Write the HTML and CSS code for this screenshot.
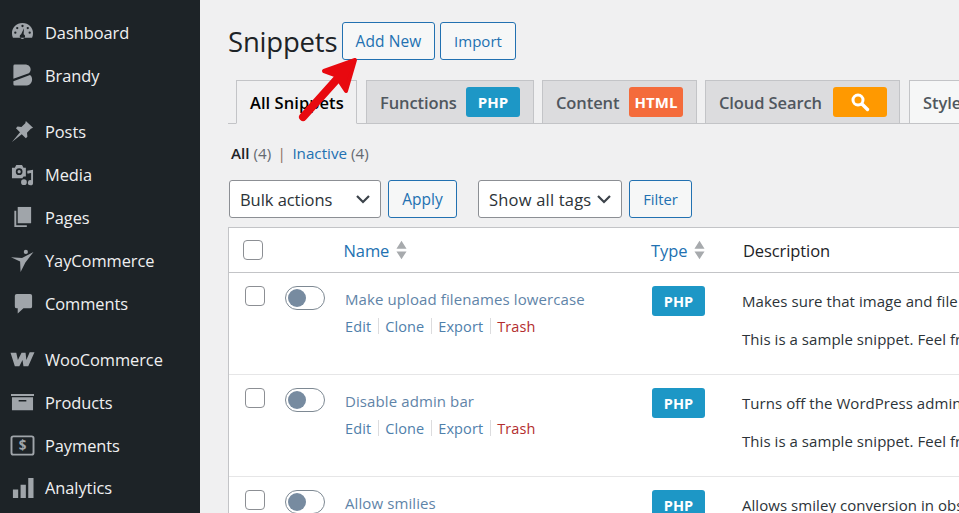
FILE: index.html
```html
<!DOCTYPE html>
<html lang="en">
<head>
<meta charset="utf-8">
<title>Snippets</title>
<link rel="stylesheet" href="styles.css">
</head>
<body>
<nav class="side">
  <a class="item"><svg class="ic" viewBox="0 0 24 24"><path fill-rule="evenodd" d="M12 2C5.600 2 1 7 1 12.500c0 1.900.3 3.500 1 5h20c.7-1.500 1-3.100 1-5C23 7 18.400 2 12 2zM12 4a1.200 1.200 0 1 1 0 2.400A1.200 1.200 0 0 1 12 4zM6.500 6.200a1.200 1.200 0 1 1 0 2.400 1.200 1.200 0 0 1 0-2.400zM17.500 6.200a1.200 1.200 0 1 1 0 2.400 1.200 1.200 0 0 1 0-2.400zM4.500 11a1.200 1.200 0 1 1 0 2.400 1.200 1.200 0 0 1 0-2.400zM19.500 11a1.200 1.200 0 1 1 0 2.400 1.200 1.200 0 0 1 0-2.400zM13.500 7.500l-.3 6.200a2.600 2.600 0 1 1-2.600 0z"/></svg>Dashboard</a>
  <a class="item"><svg class="ic" viewBox="0 0 24 24"><path d="M4 .5h10.500c3.800 0 6 2.300 6 5.300 0 1.600-.7 3-1.900 3.900L2.500 15.300V2A1.500 1.500 0 0 1 4 .5zM2.500 18l17.300-6.500c1.400 1 2.200 2.500 2.200 4.600 0 3.900-2.900 6.400-7 6.400H4a1.500 1.500 0 0 1-1.500-1.500z"/></svg>Brandy</a>
  <a class="item gap"><svg class="ic" viewBox="0 0 24 24"><path d="M15.500 1l7.500 7.200-2.300.8-4 4.400.4 4-1.600 1.700-4.300-4.300L1 23 9.400 12.700 5.200 8.500l1.600-1.600 4.100.4 4-4z"/></svg>Posts</a>
  <a class="item"><svg class="ic" viewBox="0 0 24 24"><path fill-rule="evenodd" d="M1 5h3l1.500-3h6L13 5h2.500v9H13.200a4 4 0 0 0-1.200 2H1zM8.500 5.500a3.500 3.500 0 1 0 0 7 3.500 3.500 0 0 0 0-7z"/><circle cx="8.500" cy="9" r="1.700"/><path d="M17 8l6-1v13.500a2.700 2.700 0 1 1-2-2.500v-7.500l-2 .3V11h-2zM13.500 17a3 3 0 1 1 0 6 3 3 0 0 1 0-6z"/></svg>Media</a>
  <a class="item"><svg class="ic" viewBox="0 0 24 24"><path d="M7 1h14v17H7z"/><path d="M3.500 5H5.500v15h11v2H3.500z"/></svg>Pages</a>
  <a class="item"><svg class="ic" viewBox="0 0 24 24"><circle cx="15.500" cy="3" r="2.200"/><path d="M0 8.500l11.500 1L23.500 3 17 11.500l-2 2.500-5 10-.5-11z"/></svg>YayCommerce</a>
  <a class="item"><svg class="ic" viewBox="0 0 24 24"><path d="M6 2h14a2 2 0 0 1 2 2v11a2 2 0 0 1-2 2h-7l-6 5.500V17H6a2 2 0 0 1-2-2V4a2 2 0 0 1 2-2z"/></svg>Comments</a>
  <a class="item gap"><svg class="ic wide" viewBox="0 0 25 24"><path d="M0 5h6l1.700 7.500L11.500 5h4.200l.8 7.500L20 4.500h5l-6.500 14.500h-5l-1-6.500-3.300 6.500H4.500z"/></svg>WooCommerce</a>
  <a class="item"><svg class="ic" viewBox="0 0 24 24"><path fill-rule="evenodd" d="M0 3h24v2.300H0zM1 6.500h22V20H1zM8 9.500v1.500h8V9.500z"/></svg>Products</a>
  <a class="item"><svg class="ic wide" viewBox="0 0 25 24"><rect x="1" y="2.500" width="23" height="19" rx="2" fill="none" stroke="currentColor" stroke-width="2"/><text class="dollar" x="12.500" y="17" text-anchor="middle">$</text></svg>Payments</a>
  <a class="item"><svg class="ic" viewBox="0 0 24 24"><path d="M2 14h5.500v9H2zM10 9h5.500v14H10zM18 2h5.500v21H18z"/></svg>Analytics</a>
</nav>
<main class="main">
  <header class="head">
    <h1 class="title">Snippets</h1>
    <a class="btn btn-new">Add New</a>
    <a class="btn btn-import">Import</a>
  </header>
  <div class="tabs">
    <a class="tab active t-all">All Snippets</a>
    <a class="tab t-fn">Functions <span class="badge php">PHP</span></a>
    <a class="tab t-ct">Content <span class="badge html">HTML</span></a>
    <a class="tab t-cl">Cloud Search <span class="badge search"><svg class="mag" viewBox="0 0 20 20"><circle cx="8" cy="8" r="5" fill="none" stroke="#fff" stroke-width="3"/><path d="M12 12l5.500 5.500" stroke="#fff" stroke-width="3.400" stroke-linecap="round"/></svg></span></a>
    <a class="tab plain">Styles</a>
  </div>
  <div class="views"><b>All</b> <span class="count">(4)</span> <span class="sep">|</span> <a class="link">Inactive</a> <span class="count">(4)</span></div>
  <div class="filters">
    <div class="sel sel-bulk">Bulk actions<svg class="chev" viewBox="0 0 16 10"><path d="M2 2l6 6 6-6" fill="none" stroke="#3c434a" stroke-width="2.200"/></svg></div>
    <a class="btn btn-apply">Apply</a>
    <div class="sel sel-tags">Show all tags<svg class="chev" viewBox="0 0 16 10"><path d="M2 2l6 6 6-6" fill="none" stroke="#3c434a" stroke-width="2.200"/></svg></div>
    <a class="btn btn-filter">Filter</a>
  </div>
  <section class="table">
    <div class="row thead">
      <div class="c-check"><span class="cb"></span></div>
      <div class="c-toggle"></div>
      <div class="c-name"><a class="link">Name</a><svg class="sort" viewBox="0 0 12 22"><path d="M6 1l5.500 8.500H.5zM.5 12.500h11L6 21z"/></svg></div>
      <div class="c-type"><a class="link">Type</a><svg class="sort" viewBox="0 0 12 22"><path d="M6 1l5.500 8.500H.5zM.5 12.500h11L6 21z"/></svg></div>
      <div class="c-desc">Description</div>
    </div>
    <div class="row snip">
      <div class="c-check"><span class="cb"></span></div>
      <div class="c-toggle"><span class="toggle"></span></div>
      <div class="c-name"><a class="sn-title">Make upload filenames lowercase</a>
        <div class="actions"><a>Edit</a><i></i><a>Clone</a><i></i><a>Export</a><i></i><a class="trash">Trash</a></div></div>
      <div class="c-type"><span class="badge php big">PHP</span></div>
      <div class="c-desc"><p>Makes sure that image and file uploads have lowercase filenames.</p><p>This is a sample snippet. Feel free to use it, edit it, or remove it.</p></div>
    </div>
    <div class="row snip">
      <div class="c-check"><span class="cb"></span></div>
      <div class="c-toggle"><span class="toggle"></span></div>
      <div class="c-name"><a class="sn-title">Disable admin bar</a>
        <div class="actions"><a>Edit</a><i></i><a>Clone</a><i></i><a>Export</a><i></i><a class="trash">Trash</a></div></div>
      <div class="c-type"><span class="badge php big">PHP</span></div>
      <div class="c-desc"><p>Turns off the WordPress admin bar for everyone except administrators.</p><p>This is a sample snippet. Feel free to use it, edit it, or remove it.</p></div>
    </div>
    <div class="row snip">
      <div class="c-check"><span class="cb"></span></div>
      <div class="c-toggle"><span class="toggle"></span></div>
      <div class="c-name"><a class="sn-title">Allow smilies</a>
        <div class="actions"><a>Edit</a><i></i><a>Clone</a><i></i><a>Export</a><i></i><a class="trash">Trash</a></div></div>
      <div class="c-type"><span class="badge php big">PHP</span></div>
      <div class="c-desc"><p>Allows smiley conversion in obscure places.</p><p>This is a sample snippet. Feel free to use it, edit it, or remove it.</p></div>
    </div>
  </section>
  <svg class="arrow" viewBox="0 0 64 68"><path d="M5 62L40 23" fill="none" stroke="#e8090f" stroke-width="8" stroke-linecap="round"/><path d="M57 5L26 16l11 4 5 7 6 9z" fill="#e8090f" stroke="#e8090f" stroke-width="4" stroke-linejoin="round"/></svg>
</main>
</body>
</html>
```
FILE: styles.css
```css
* { box-sizing: border-box; }
html, body { margin: 0; height: 513px; overflow: hidden; }
body {
  display: flex;
  width: 959px;
  background: #f0f0f1;
  font-family: "Open Sans", "Noto Sans", sans-serif;
  font-size: 15px;
  color: #3c434a;
}
.side {
  flex: none;
  width: 200px;
  height: 513px;
  background: #1d2327;
  padding-top: 11.500px;
  overflow: hidden;
}
.item {
  display: flex;
  align-items: center;
  height: 42.8px;
  padding-left: 11px;
  gap: 11px;
  color: #f0f0f1;
  font-size: 16.400px;
  letter-spacing: -0.05px;
}
.item.gap { margin-top: 13.5px; }
.ic { flex: none; width: 23px; height: 23px; fill: #a0a5aa; color: #a0a5aa; }
.ic.wide { width: 25px; margin-left: -1px; margin-right: -1px; }
.dollar { fill: #a0a5aa; font: 700 14px "Open Sans", sans-serif; }
.main { position: relative; flex: none; width: 759px; padding-left: 28px; overflow: hidden; }
.head { display: flex; align-items: center; height: 38px; margin-top: 22px; }
.title {
  margin: 0 5px 0 0;
  width: 109px;
  font-size: 27.500px;
  font-weight: 400;
  color: #1d2327;
  white-space: nowrap;
  letter-spacing: -0.2px;
}
.btn {
  display: flex;
  align-items: center;
  justify-content: center;
  height: 38px;
  border: 1px solid #2271b1;
  border-radius: 3px;
  background: #f6f7f7;
  color: #2271b1;
  font-size: 15px;
}
.btn-new { width: 93px; font-size: 15.500px; letter-spacing: 0.1px; }
.btn-import { width: 76px; margin-left: 5px; }
.tabs {
  display: flex;
  height: 44px;
  margin-top: 20px;
  padding-left: 8px;
  width: 800px;
  border-bottom: 1px solid #c3c4c7;
  align-items: stretch;
}
.tab {
  display: flex;
  align-items: center;
  flex: none;
  height: 44px;
  padding-left: 13px;
  margin-right: 8px;
  border: 1px solid #c3c4c7;
  background: #dcdcde;
  color: #50575e;
  font-size: 16.500px;
  font-weight: 600;
  letter-spacing: -0.1px;
}
.tab.active { background: #f0f0f1; border-bottom-color: #f0f0f1; color: #000; font-weight: 600; letter-spacing: 0.05px; }
.tab.plain { background: #f6f7f7; }
.t-all { width: 121px; }
.t-fn { width: 168px; margin-left: 1px; }
.t-ct { width: 155px; }
.t-cl { width: 195px; }
.plain { width: 100px; margin-left: 1px; }
.badge {
  display: inline-flex;
  align-items: center;
  justify-content: center;
  border-radius: 3px;
  color: #fff;
  font-weight: 700;
  font-size: 15px;
  letter-spacing: 0;
}
.tab .badge { position: absolute; top: 87px; width: 54px; height: 30px; }
.t-fn .badge { left: 266px; }
.t-ct .badge { left: 429px; }
.t-cl .badge { left: 633px; }
.php { background: #1d97c6; }
.html { background: #f46b3b; }
.search { background: #ff9900; }
.mag { width: 20px; height: 20px; }
.views { margin-top: 20px; height: 19px; padding-left: 3px; font-size: 15.200px; line-height: 19px; white-space: nowrap; letter-spacing: 0; }
.views b { color: #1d2327; font-weight: 600; }
.count { color: #646970; }
.sep { margin: 0 2.500px; color: #8a6d5c; }
.link { color: #2271b1; }
.filters { display: flex; margin-top: 17px; padding-left: 1px; height: 38px; }
.sel {
  display: flex;
  align-items: center;
  justify-content: space-between;
  height: 38px;
  padding: 0 9px 0 10px;
  border: 1px solid #8c8f94;
  border-radius: 3px;
  background: #fff;
  color: #2c3338;
  font-size: 16.500px;
  letter-spacing: -0.05px;
}
.sel-bulk { width: 152px; }
.sel-tags { width: 144px; margin-left: 21px; letter-spacing: 0.2px; }
.chev { width: 16px; height: 10px; }
.btn-apply { width: 69px; margin-left: 7px; font-size: 15.500px; }
.btn-filter { width: 63px; margin-left: 7px; font-size: 14.800px; }
.table {
  width: 900px;
  margin-top: 9px;
  border: 1px solid #c3c4c7;
  background: #fff;
}
.row { display: flex; }
.thead { height: 45px; align-items: center; border-bottom: 1px solid #c3c4c7; font-size: 16.500px; letter-spacing: -0.1px; }
.snip { height: 102px; padding-top: 13px; border-bottom: 1px solid #e6e6e7; font-size: 15px; }
.c-check { flex: none; width: 56px; padding-left: 16px; display: flex; }
.thead .c-check { padding-left: 14px; }
.c-toggle { flex: none; width: 60px; }
.c-name { flex: none; width: 306px; }
.thead .c-name { margin-left: -1.500px; margin-right: 1.500px; }
.thead .c-name, .thead .c-type { display: flex; align-items: center; gap: 7px; }
.c-type { flex: none; width: 92px; }
.snip .c-type { padding-left: 1px; }
.c-desc { flex: 1; color: #2c3338; }
.snip .c-desc { margin-left: -1px; }
.thead .c-desc { color: #1d2327; }
.cb { display: block; width: 20px; height: 20px; border: 1px solid #8c8f94; border-radius: 4px; background: #fff; }
.toggle { position: relative; display: block; width: 40px; height: 24px; border: 1px solid #7e8993; border-radius: 12px; background: #fff; }
.toggle::after { content: ""; position: absolute; left: 2px; top: 2px; width: 18px; height: 18px; border-radius: 50%; background: #778ba0; }
.sort { width: 11px; height: 22px; fill: #a7aaad; }
.sn-title { display: block; color: #5f84a8; letter-spacing: 0.1px; line-height: 20px; margin-top: 3px; }
.actions { display: flex; align-items: center; margin-top: 7px; height: 20px; font-size: 14.500px; color: #4f80ab; letter-spacing: 0.1px; }
.actions i { width: 1px; height: 16px; margin: 0 6.500px; background: #dcdcde; }
.trash { color: #b32d2e; }
.big { width: 53px; height: 30px; font-size: 14.500px; }
.c-desc p { margin: 5px 0 18px; line-height: 20px; white-space: nowrap; letter-spacing: 0.05px; }
.arrow { position: absolute; left: 98px; top: 55px; width: 64px; height: 68px; }
```
